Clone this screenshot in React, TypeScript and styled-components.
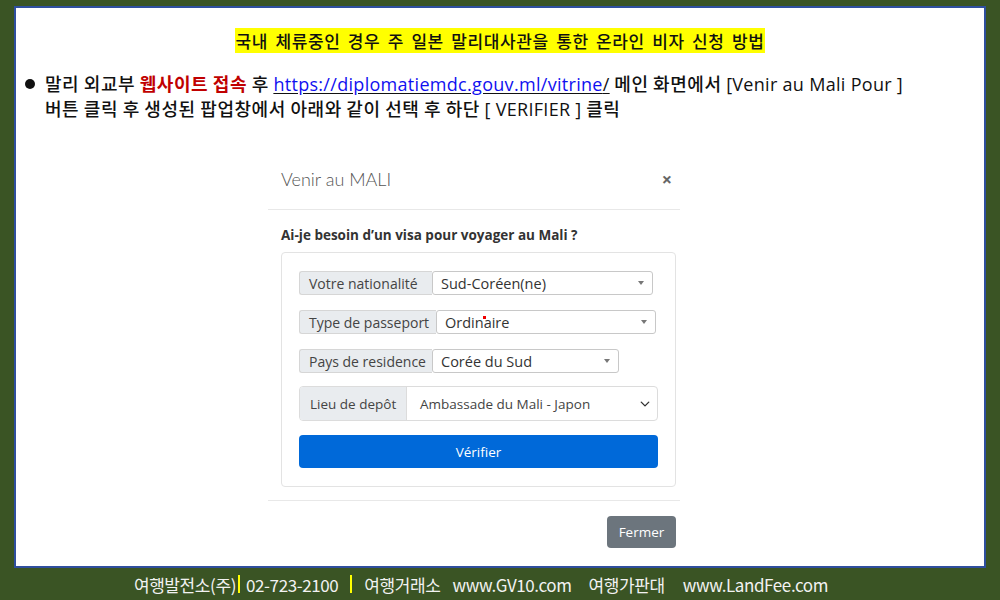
import styled, { createGlobalStyle } from "styled-components";

const Global = createGlobalStyle`
  html, body {
    margin: 0;
    padding: 0;
    background: #3a5424;
  }
  #root {
    width: 1000px;
    height: 600px;
  }
`;

const Page = styled.div`
  width: 1000px;
  height: 600px;
  display: flex;
  flex-direction: column;
  padding: 6px 14px 0;
  box-sizing: border-box;
  font-family: "Noto Sans CJK KR", "Noto Sans", sans-serif;
`;

const Sheet = styled.section`
  height: 562px;
  box-sizing: border-box;
  background: #fff;
  border: 2px solid #2f4f9e;
  display: flex;
  flex-direction: column;
`;

const Heading = styled.h1`
  margin: 22px 0 0;
  text-align: center;
  font-size: 17px;
  font-weight: 500;
  line-height: 21px;
  letter-spacing: 0.6px;
  word-spacing: 3px;
  color: #111;
`;

const Marker = styled.span`
  background: #ffff00;
  padding: 0 1px;
`;

const Guide = styled.div`
  margin: 20px 0 0 9px;
  font-size: 18px;
  font-weight: 500;
  line-height: 24px;
  letter-spacing: 0.55px;
  color: #111;
  display: flex;
  gap: 10px;
`;

const Dot = styled.span`
  width: 10px;
  height: 10px;
  border-radius: 50%;
  background: #111;
  margin-top: 8px;
  flex: none;
`;

const Red = styled.span`
  color: #c00000;
  font-weight: 700;
`;

const Link = styled.span`
  text-decoration: underline;
  text-underline-offset: 2px;
  font-family: "Open Sans", sans-serif;
  font-weight: 400;
  letter-spacing: 0.3px;
`;

const Blue = styled.span`
  color: #1010f0;
`;

const Latin = styled.span`
  font-family: "Open Sans", sans-serif;
  font-weight: 400;
  letter-spacing: 0.3px;
`;

/* modal mock */
const Modal = styled.div`
  margin: 32px 0 0 252px;
  width: 412px;
  font-family: "Open Sans", sans-serif;
  color: #333;
`;

const ModalHead = styled.div`
  display: flex;
  align-items: center;
  justify-content: space-between;
  padding: 0 8px 0 13px;
  height: 56px;
  border-bottom: 1px solid #e8e8e8;
`;

const ModalTitle = styled.div`
  font-family: "Lato", sans-serif;
  font-weight: 300;
  font-size: 18px;
  color: #555;
  margin-top: -4px;
`;

const Close = styled.span`
  font-size: 18px;
  font-weight: 700;
  color: #666;
  margin-top: -4px;
`;

const Question = styled.div`
  margin: 16px 0 0 13px;
  font-size: 13.5px;
  font-weight: 700;
  color: #333;
`;

const Card = styled.div`
  margin: 8px 4px 0 13px;
  border: 1px solid #e3e3e3;
  border-radius: 4px;
  padding: 18px 17px 18px 17px;
  display: flex;
  flex-direction: column;
`;

const Row = styled.div<{ $top?: number }>`
  display: flex;
  margin-top: ${(p) => p.$top ?? 0}px;
  height: 24px;
`;

const Label = styled.div<{ $w: number }>`
  width: ${(p) => p.$w}px;
  box-sizing: border-box;
  background: #e9ecef;
  border: 1px solid #d6d6d6;
  border-right: none;
  border-radius: 3px 0 0 3px;
  font-size: 14px;
  color: #444;
  padding-left: 9px;
  display: flex;
  align-items: center;
  white-space: nowrap;
`;

const Select = styled.div<{ $w: number }>`
  width: ${(p) => p.$w}px;
  box-sizing: border-box;
  border: 1px solid #c8c8c8;
  border-radius: 3px;
  font-size: 14.5px;
  color: #333;
  padding: 0 8px;
  display: flex;
  align-items: center;
  justify-content: space-between;
  position: relative;
  background: #fff;
`;

const Caret = styled.span`
  width: 0;
  height: 0;
  border-left: 3.5px solid transparent;
  border-right: 3.5px solid transparent;
  border-top: 4px solid #777;
`;

const RedMark = styled.span`
  position: absolute;
  left: 46px;
  top: 5px;
  width: 3px;
  height: 3px;
  background: #e00;
`;

const Group = styled.div`
  display: flex;
  margin-top: 13px;
  height: 33px;
  border: 1px solid #dcdcdc;
  border-radius: 4px;
  overflow: hidden;
`;

const GroupLabel = styled.div`
  width: 107px;
  box-sizing: border-box;
  background: #e9ecef;
  border-right: 1px solid #dcdcdc;
  font-size: 13.5px;
  color: #444;
  padding-left: 10px;
  display: flex;
  align-items: center;
`;

const GroupSelect = styled.div`
  flex: 1;
  font-size: 13.5px;
  color: #444;
  padding: 0 7px 0 13px;
  display: flex;
  align-items: center;
  justify-content: space-between;
`;

const Submit = styled.div`
  margin-top: 14px;
  height: 33px;
  border-radius: 4px;
  background: #0069d9;
  color: #fff;
  font-size: 13.5px;
  display: flex;
  align-items: center;
  justify-content: center;
`;

const ModalFoot = styled.div`
  margin-top: 13px;
  border-top: 1px solid #e8e8e8;
  padding: 15px 4px 0 0;
  display: flex;
  justify-content: flex-end;
`;

const Dismiss = styled.div`
  width: 69px;
  height: 32px;
  border-radius: 4px;
  background: #6c757d;
  color: #fff;
  font-size: 13.5px;
  display: flex;
  align-items: center;
  justify-content: center;
`;

const Footer = styled.footer`
  flex: 1;
  display: flex;
  align-items: center;
  justify-content: center;
  color: #f2f2f2;
  font-size: 17px;
  font-weight: 400;
  letter-spacing: -0.4px;
  padding-right: 38px;
`;

const Item = styled.span<{ $gap?: number }>`
  margin-left: ${(p) => p.$gap ?? 0}px;
  white-space: nowrap;
`;

const Bar = styled.span<{ $gap?: number }>`
  margin-left: ${(p) => p.$gap ?? 0}px;
  width: 2px;
  height: 18px;
  background: #ffff00;
`;

const Chevron = () => (
  <svg width="10" height="10" viewBox="0 0 16 16">
    <path d="M2 5l6 6 6-6" fill="none" stroke="#333" strokeWidth="2.2" strokeLinecap="round" strokeLinejoin="round" />
  </svg>
);

export default function App() {
  return (
    <>
      <Global />
      <Page>
        <Sheet>
          <Heading>
            <Marker>국내 체류중인 경우 주 일본 말리대사관을 통한 온라인 비자 신청 방법</Marker>
          </Heading>
          <Guide>
            <Dot />
            <div>
              말리 외교부 <Red>웹사이트 접속</Red> 후{" "}
              <Link>
                <Blue>https://diplomatiemdc.gouv.ml/vitrine</Blue>/
              </Link>{" "}
              메인 화면에서 <Latin>[Venir au Mali Pour ]</Latin>
              <br />
              버튼 클릭 후 생성된 팝업창에서 아래와 같이 선택 후 하단 <Latin>[ VERIFIER ]</Latin> 클릭
            </div>
          </Guide>
          <Modal>
            <ModalHead>
              <ModalTitle>Venir au MALI</ModalTitle>
              <Close>×</Close>
            </ModalHead>
            <Question>Ai-je besoin d’un visa pour voyager au Mali ?</Question>
            <Card>
              <Row>
                <Label $w={133}>Votre nationalité</Label>
                <Select $w={221}>
                  Sud-Coréen(ne)
                  <Caret />
                </Select>
              </Row>
              <Row $top={15}>
                <Label $w={137}>Type de passeport</Label>
                <Select $w={220}>
                  Ordinaire
                  <RedMark />
                  <Caret />
                </Select>
              </Row>
              <Row $top={15}>
                <Label $w={133}>Pays de residence</Label>
                <Select $w={187}>
                  Corée du Sud
                  <Caret />
                </Select>
              </Row>
              <Group>
                <GroupLabel>Lieu de depôt</GroupLabel>
                <GroupSelect>
                  Ambassade du Mali - Japon
                  <Chevron />
                </GroupSelect>
              </Group>
              <Submit>Vérifier</Submit>
            </Card>
            <ModalFoot>
              <Dismiss>Fermer</Dismiss>
            </ModalFoot>
          </Modal>
        </Sheet>
        <Footer>
          <Item>여행발전소(주)</Item>
          <Bar $gap={2} />
          <Item $gap={6}>02-723-2100</Item>
          <Bar $gap={12} />
          <Item $gap={12}>여행거래소</Item>
          <Item $gap={12}>www.GV10.com</Item>
          <Item $gap={17}>여행가판대</Item>
          <Item $gap={18}>www.LandFee.com</Item>
        </Footer>
      </Page>
    </>
  );
}
